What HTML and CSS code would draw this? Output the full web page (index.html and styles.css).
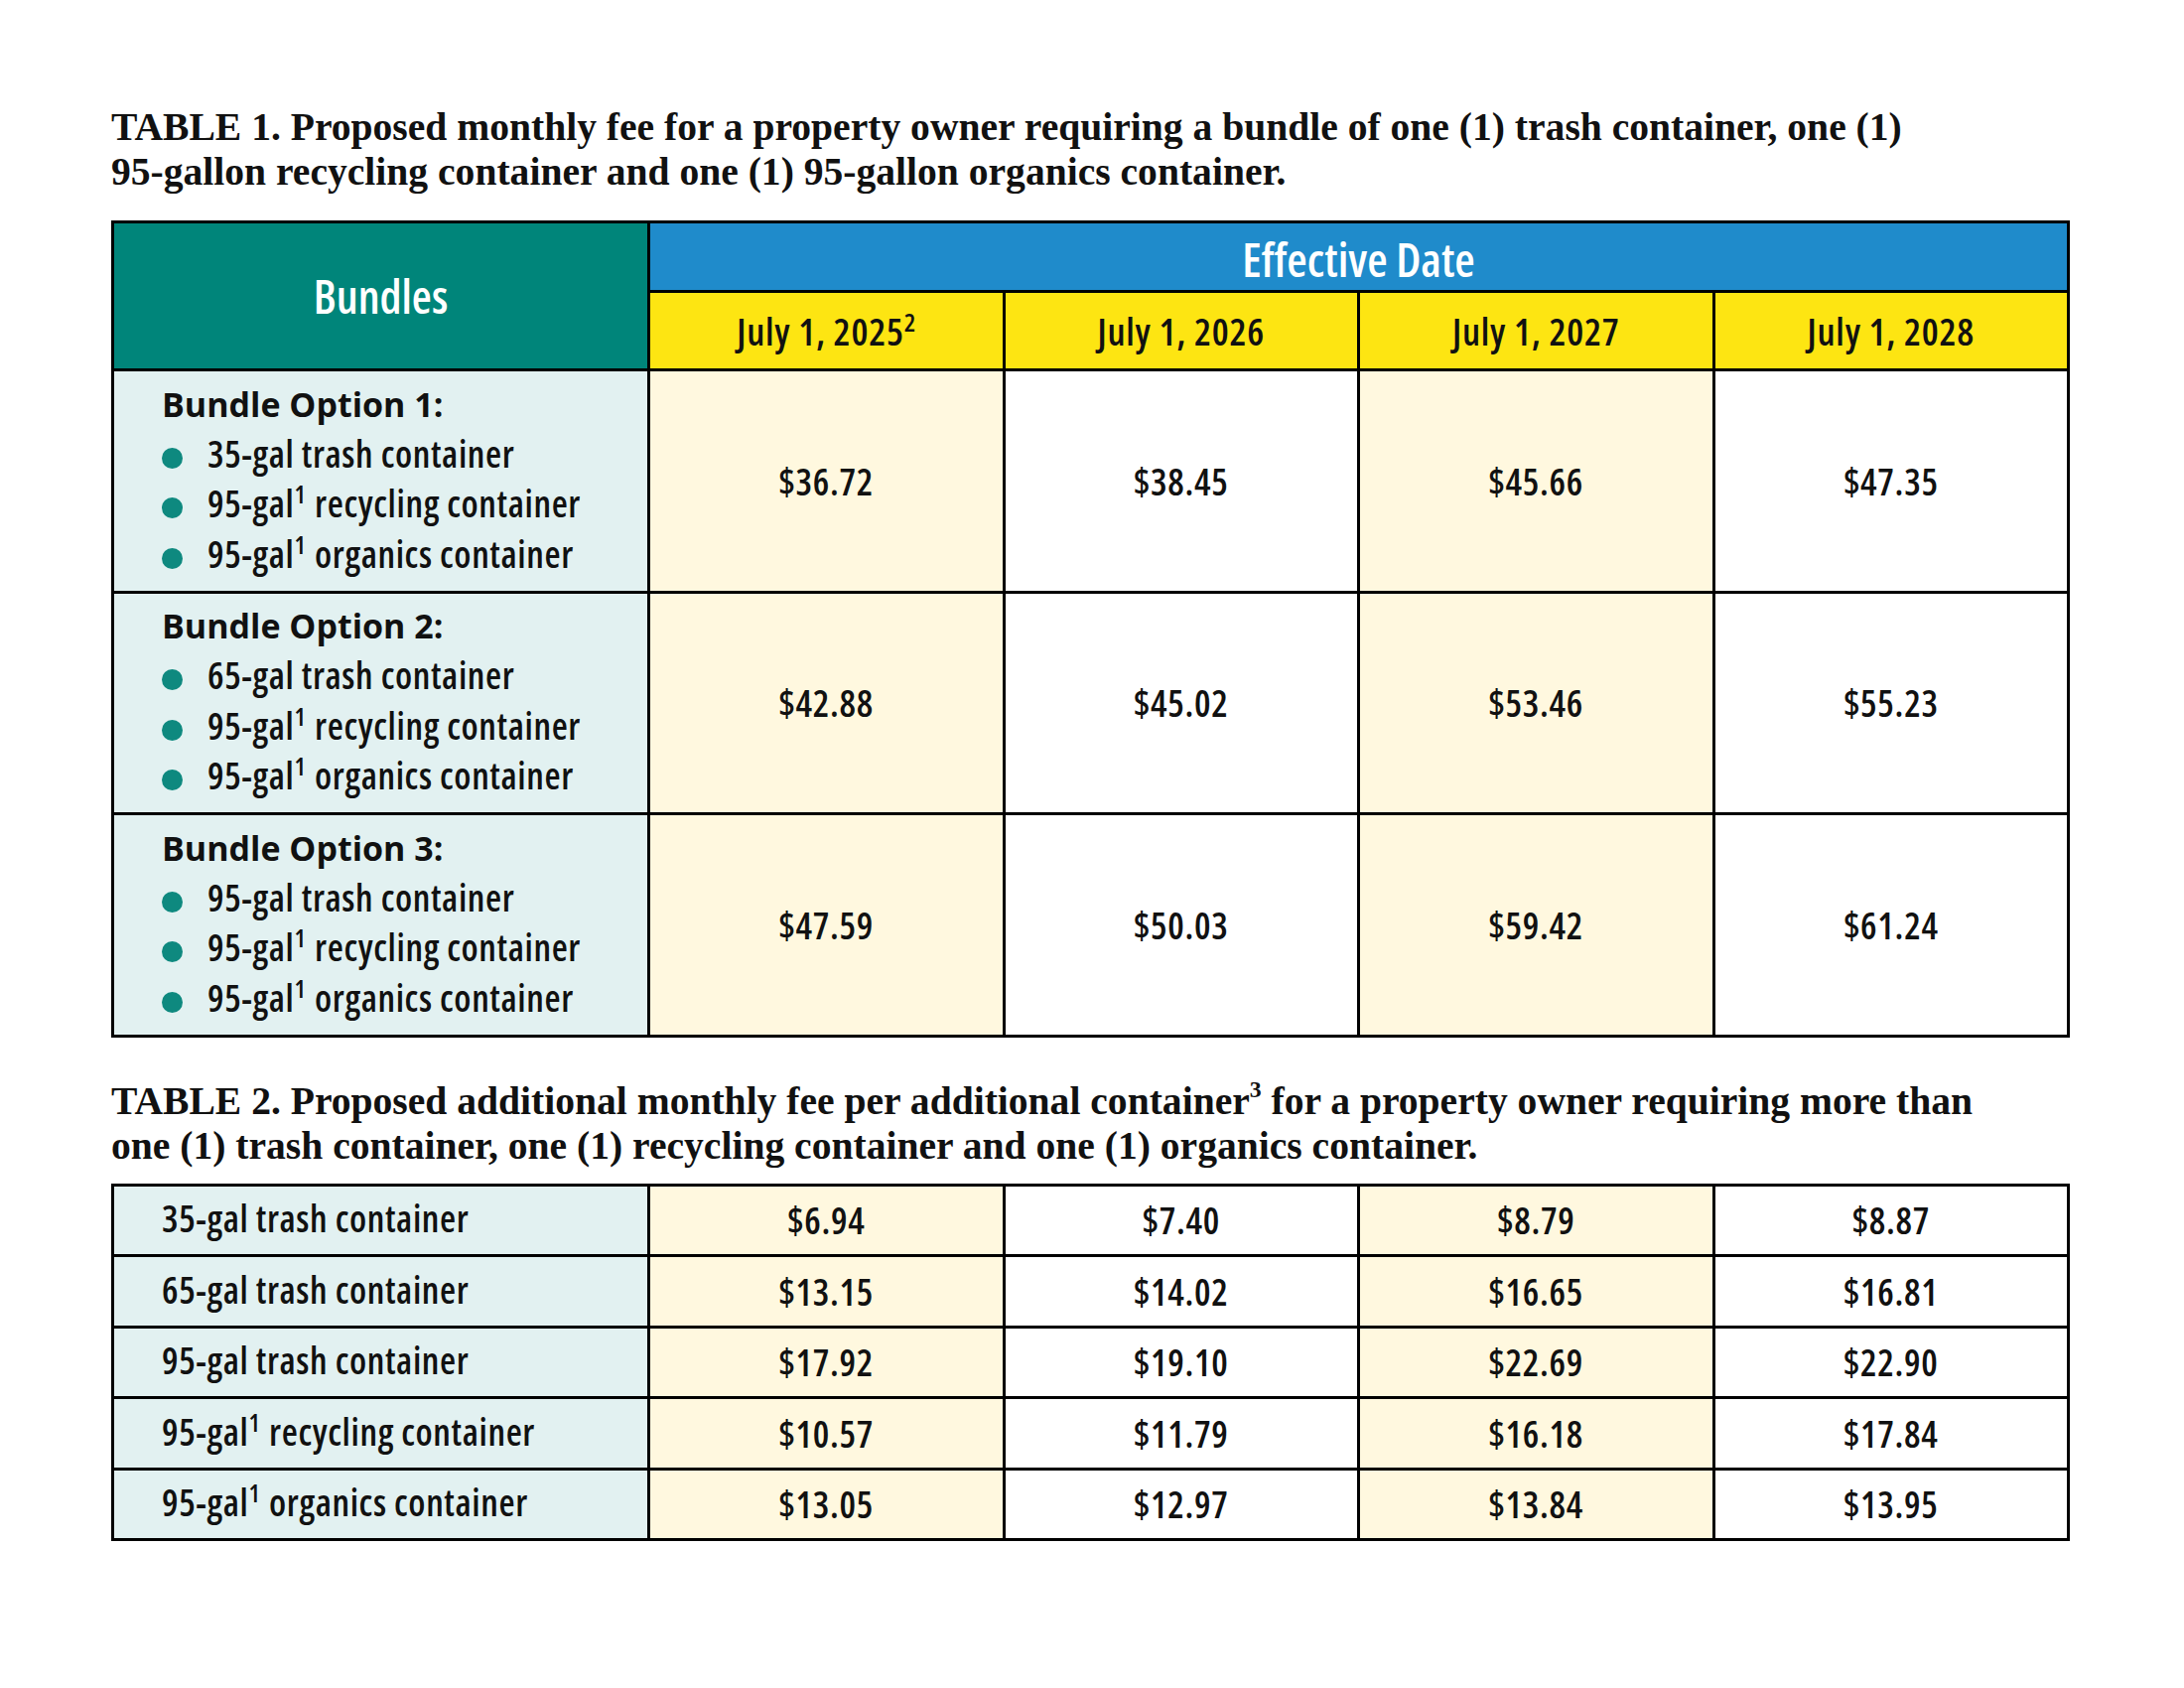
FILE: index.html
```html
<!DOCTYPE html>
<html lang="en">
<head>
<meta charset="utf-8">
<title>Proposed monthly fees</title>
<link rel="stylesheet" href="styles.css">
</head>
<body>
<div class="page">
  <p class="caption caption-1">TABLE 1. Proposed monthly fee for a property owner requiring a bundle of one (1) trash container, one (1)<br>95-gallon recycling container and one (1) 95-gallon organics container.</p>

  <table class="fees">
    <colgroup>
      <col class="col-label"><col class="col-date"><col class="col-date"><col class="col-date"><col class="col-date">
    </colgroup>
    <thead>
      <tr class="row-effective">
        <th rowspan="2" class="head-bundles">Bundles</th>
        <th colspan="4" class="head-effective">Effective Date</th>
      </tr>
      <tr class="row-dates">
        <th class="head-date">July 1, 2025<sup>2</sup></th>
        <th class="head-date">July 1, 2026</th>
        <th class="head-date">July 1, 2027</th>
        <th class="head-date">July 1, 2028</th>
      </tr>
    </thead>
    <tbody>
      <tr class="row-bundle">
        <td class="label">
          <div class="bundle">
            <div class="bundle-title">Bundle Option 1:</div>
            <ul class="bundle-items">
              <li>35-gal trash container</li>
              <li>95-gal<sup>1</sup> recycling container</li>
              <li>95-gal<sup>1</sup> organics container</li>
            </ul>
          </div>
        </td>
        <td class="price alt">$36.72</td>
        <td class="price">$38.45</td>
        <td class="price alt">$45.66</td>
        <td class="price">$47.35</td>
      </tr>
      <tr class="row-bundle">
        <td class="label">
          <div class="bundle">
            <div class="bundle-title">Bundle Option 2:</div>
            <ul class="bundle-items">
              <li>65-gal trash container</li>
              <li>95-gal<sup>1</sup> recycling container</li>
              <li>95-gal<sup>1</sup> organics container</li>
            </ul>
          </div>
        </td>
        <td class="price alt">$42.88</td>
        <td class="price">$45.02</td>
        <td class="price alt">$53.46</td>
        <td class="price">$55.23</td>
      </tr>
      <tr class="row-bundle">
        <td class="label">
          <div class="bundle">
            <div class="bundle-title">Bundle Option 3:</div>
            <ul class="bundle-items">
              <li>95-gal trash container</li>
              <li>95-gal<sup>1</sup> recycling container</li>
              <li>95-gal<sup>1</sup> organics container</li>
            </ul>
          </div>
        </td>
        <td class="price alt">$47.59</td>
        <td class="price">$50.03</td>
        <td class="price alt">$59.42</td>
        <td class="price">$61.24</td>
      </tr>
    </tbody>
  </table>

  <p class="caption caption-2">TABLE 2. Proposed additional monthly fee per additional container<sup>3</sup> for a property owner requiring more than<br>one (1) trash container, one (1) recycling container and one (1) organics container.</p>

  <table class="fees fees-extra">
    <colgroup>
      <col class="col-label"><col class="col-date"><col class="col-date"><col class="col-date"><col class="col-date">
    </colgroup>
    <tbody>
      <tr class="row-extra">
        <td class="label label-line">35-gal trash container</td>
        <td class="price alt">$6.94</td>
        <td class="price">$7.40</td>
        <td class="price alt">$8.79</td>
        <td class="price">$8.87</td>
      </tr>
      <tr class="row-extra">
        <td class="label label-line">65-gal trash container</td>
        <td class="price alt">$13.15</td>
        <td class="price">$14.02</td>
        <td class="price alt">$16.65</td>
        <td class="price">$16.81</td>
      </tr>
      <tr class="row-extra">
        <td class="label label-line">95-gal trash container</td>
        <td class="price alt">$17.92</td>
        <td class="price">$19.10</td>
        <td class="price alt">$22.69</td>
        <td class="price">$22.90</td>
      </tr>
      <tr class="row-extra">
        <td class="label label-line">95-gal<sup>1</sup> recycling container</td>
        <td class="price alt">$10.57</td>
        <td class="price">$11.79</td>
        <td class="price alt">$16.18</td>
        <td class="price">$17.84</td>
      </tr>
      <tr class="row-extra">
        <td class="label label-line">95-gal<sup>1</sup> organics container</td>
        <td class="price alt">$13.05</td>
        <td class="price">$12.97</td>
        <td class="price alt">$13.84</td>
        <td class="price">$13.95</td>
      </tr>
    </tbody>
  </table>
</div>
</body>
</html>
```
FILE: styles.css
```css
* { box-sizing: border-box; }

html, body {
  margin: 0;
  padding: 0;
  background: #ffffff;
}

.page {
  width: 2200px;
  padding: 0 118px 0 112px;
}

.caption {
  margin: 0;
  font-family: "Liberation Serif", "Times New Roman", serif;
  font-weight: 700;
  font-size: 39.6px;
  line-height: 45px;
  color: #111111;
  white-space: nowrap;
}

.caption-1 { padding-top: 106px; }
.caption-2 { margin-top: 42px; }

.caption sup {
  font-size: 0.6em;
  line-height: 0;
  vertical-align: 0.7em;
}

.fees {
  width: 1970px;
  table-layout: fixed;
  border-collapse: collapse;
  border: 3px solid #000000;
  margin-top: 26px;
  font-family: "Open Sans", "Noto Sans", sans-serif;
  color: #111111;
}

.fees-extra { margin-top: 15px; }

.col-label { width: 540px; }
.col-date { width: 357.5px; }

.fees th,
.fees td {
  border: 3px solid #000000;
  padding: 0;
  text-align: center;
  vertical-align: middle;
}

.row-effective { height: 70px; }
.row-dates { height: 79px; }
.row-bundle { height: 223.5px; }
.row-extra { height: 71.5px; }

.head-bundles {
  background: #00857a;
  color: #ffffff;
  font-size: 46px;
  font-weight: 600;
  font-stretch: 75%;
  padding-bottom: 2px;
}

.fees .head-effective {
  background: #1f8bcb;
  color: #ffffff;
  font-size: 47px;
  font-weight: 600;
  font-stretch: 75%;
  line-height: 1;
  padding-top: 6px;
}

.head-date {
  background: #fde512;
  color: #111111;
  font-size: 38px;
  font-weight: 600;
  font-stretch: 75%;
  letter-spacing: 0.8px;
}

.head-date sup,
.label sup {
  font-size: 0.68em;
  line-height: 0;
  vertical-align: 0.55em;
  letter-spacing: 0;
}

.label sup { margin-right: 2px; }

.fees .label {
  background: #e2f1f1;
  text-align: left;
}

.bundle {
  display: flex;
  flex-direction: column;
  align-items: flex-start;
  padding-left: 48px;
  padding-bottom: 4px;
}

.bundle-title {
  font-size: 34px;
  font-weight: 700;
  line-height: 50px;
}

.bundle-items {
  list-style: none;
  margin: 0;
  padding: 0;
}

.bundle-items li {
  font-size: 37px;
  font-weight: 600;
  font-stretch: 75%;
  letter-spacing: 0.6px;
  line-height: 50.5px;
  white-space: nowrap;
}

.bundle-items li::before {
  content: "";
  display: inline-block;
  width: 21px;
  height: 21px;
  margin-right: 25px;
  border-radius: 50%;
  background: #0e897f;
  vertical-align: -1px;
}

.fees .label-line {
  padding-left: 48px;
  padding-bottom: 4px;
  font-size: 37px;
  font-weight: 600;
  font-stretch: 75%;
  letter-spacing: 0.6px;
}

.price {
  background: #ffffff;
  font-size: 37px;
  font-weight: 600;
  font-stretch: 75%;
  letter-spacing: 0.7px;
}

.price.alt { background: #fff8df; }
```
